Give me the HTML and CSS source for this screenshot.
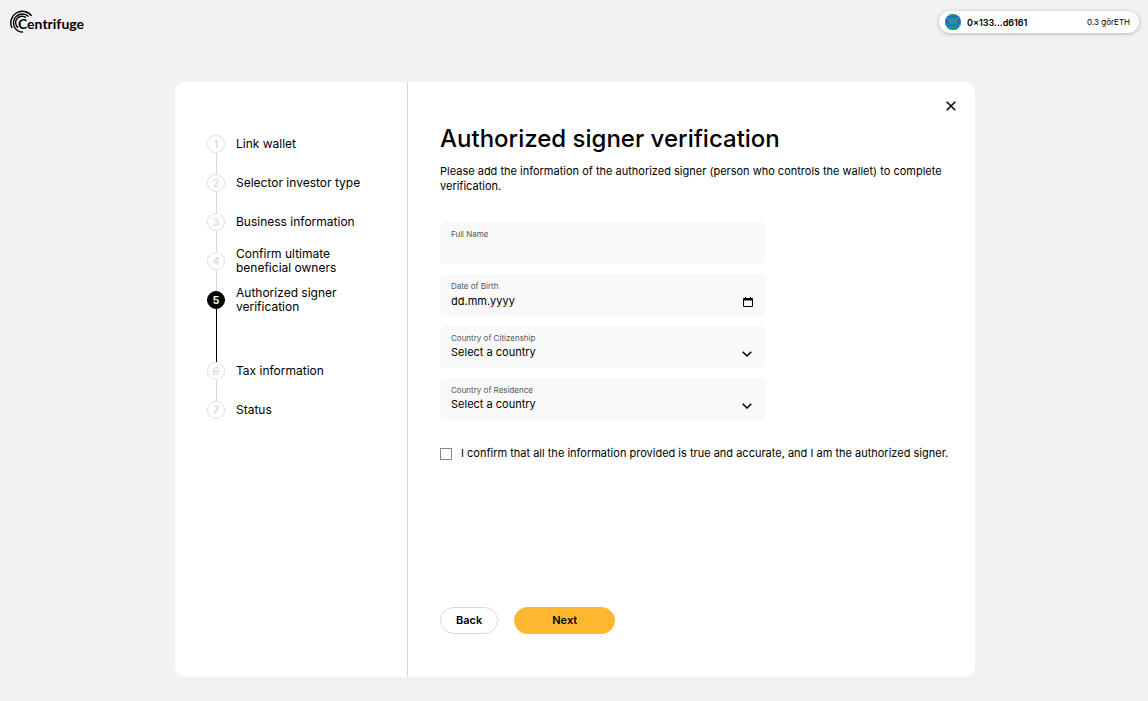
FILE: index.html
```html
<!DOCTYPE html>
<html lang="en">
<head>
<meta charset="utf-8">
<meta name="viewport" content="width=device-width, initial-scale=1">
<title>Centrifuge – Authorized signer verification</title>
<link rel="stylesheet" href="styles.css">
</head>
<body>
<header class="topbar">
  <a class="logo" href="#">
    <svg class="logo-mark" viewBox="0 0 24 24" aria-hidden="true">
      <path d="M22.600 5.800A11.600 11.600 0 0 0 3 18"/>
      <path d="M19.600 6.400A9 9 0 1 0 14 22"/>
      <path d="M17 7.600A6.400 6.400 0 0 0 9 17.600"/>
    </svg>
    <span class="logo-text">Centrifuge</span>
  </a>
  <button class="account" type="button">
    <svg class="avatar" viewBox="0 0 8 8" shape-rendering="crispEdges" aria-hidden="true">
      <path fill="#1a6fd0" d="M0 0h8v8H0z"/>
      <path fill="#1a9a8a" d="M2 0h4v1H2zM1 2h6v1H1zM2 3h4v1H2zM0 5h2v1H0zM6 5h2v1H6zM2 4h4v1H2zM2 6h4v2H2z"/>
      <path fill="#e0592a" d="M2 3h1v1H2zM5 3h1v1H5zM1 7h1v1H1zM6 7h1v1H6z"/>
    </svg>
    <span class="address">0×133...d6161</span>
    <span class="balance">0.3 görETH</span>
  </button>
</header>
<main class="page">
  <div class="card">
    <nav class="sidebar" aria-label="Onboarding steps">
      <ol class="steps">
        <li class="step"><span class="num">1</span><span class="name">Link wallet</span></li>
        <li class="step"><span class="num">2</span><span class="name">Selector investor type</span></li>
        <li class="step"><span class="num">3</span><span class="name">Business information</span></li>
        <li class="step"><span class="num">4</span><span class="name">Confirm ultimate beneficial owners</span></li>
        <li class="step active" aria-current="step"><span class="num">5</span><span class="name">Authorized signer verification</span></li>
        <li class="step"><span class="num">6</span><span class="name">Tax information</span></li>
        <li class="step"><span class="num">7</span><span class="name">Status</span></li>
      </ol>
    </nav>
    <form class="content">
      <button class="close" type="button" aria-label="Close">
        <svg viewBox="0 0 10 10" aria-hidden="true"><path d="M.7.7l8.6 8.6M9.3.7L.7 9.3"/></svg>
      </button>
      <h1 class="title">Authorized signer verification</h1>
      <p class="intro">Please add the information of the authorized signer (person who controls the wallet) to complete verification.</p>
      <div class="fields">
        <div class="field">
          <label for="name">Full Name</label>
          <input id="name" type="text">
        </div>
        <div class="field">
          <label for="birth">Date of Birth</label>
          <div class="control date">
            <input id="birth" type="text" placeholder="dd.mm.yyyy">
            <button class="picker" type="button" aria-label="Choose date">
              <svg class="calendar" viewBox="0 0 10 10" aria-hidden="true"><path fill="#000" d="M1 1h1V0h1v1h4V0h1v1h1a1 1 0 0 1 1 1v7a1 1 0 0 1-1 1H1a1 1 0 0 1-1-1V2a1 1 0 0 1 1-1zm0 2.400V9h8V3.400z"/></svg>
            </button>
          </div>
        </div>
        <div class="field">
          <label for="citizenship">Country of Citizenship</label>
          <div class="control">
            <select id="citizenship"><option>Select a country</option></select>
            <svg class="chevron" viewBox="0 0 10 6" aria-hidden="true"><path d="M.7.7L5 5 9.300.7"/></svg>
          </div>
        </div>
        <div class="field">
          <label for="residence">Country of Residence</label>
          <div class="control">
            <select id="residence"><option>Select a country</option></select>
            <svg class="chevron" viewBox="0 0 10 6" aria-hidden="true"><path d="M.7.7L5 5 9.300.7"/></svg>
          </div>
        </div>
      </div>
      <label class="confirm">
        <input type="checkbox">
        <span>I confirm that all the information provided is true and accurate, and I am the authorized signer.</span>
      </label>
      <div class="actions">
        <button class="btn" type="button">Back</button>
        <button class="btn primary" type="submit">Next</button>
      </div>
    </form>
  </div>
</main>
</body>
</html>
```
FILE: styles.css
```css
* {
  box-sizing: border-box;
}

body {
  margin: 0;
  min-height: 100vh;
  display: flex;
  flex-direction: column;
  background: #f2f2f2;
  color: #000;
  font-family: Inter, "Liberation Sans", sans-serif;
  font-size: 11px;
  line-height: 15px;
}

button,
input,
select {
  font: inherit;
  color: inherit;
  margin: 0;
  padding: 0;
  border: 0;
  background: none;
}

button {
  cursor: pointer;
}

.topbar {
  display: flex;
  align-items: center;
  justify-content: space-between;
  padding: 10px 9px 0;
}

.logo {
  display: flex;
  position: relative;
  align-items: center;
  height: 24px;
  padding: 4px 0 0 9px;
  color: #000;
  text-decoration: none;
}

.logo-mark {
  position: absolute;
  left: 0;
  top: 0;
  width: 24px;
  height: 24px;
  fill: none;
  stroke: #000;
  stroke-width: 1.4;
}

.logo-text {
  font-family: Lato, sans-serif;
  font-size: 14px;
  font-weight: 700;
  line-height: 20px;
}

.account {
  display: flex;
  align-items: center;
  width: 200px;
  height: 22px;
  padding: 0 9px 0 6px;
  border-radius: 11px;
  background: #fff;
  box-shadow: 0 1px 4px rgba(0, 0, 0, 0.25);
}

.avatar {
  width: 16px;
  height: 16px;
  margin-right: 6px;
  border-radius: 50%;
}

.address {
  font-size: 9px;
  font-weight: 600;
}

.balance {
  margin-left: auto;
  font-size: 8px;
}

.page {
  flex: 1;
  display: flex;
  justify-content: center;
  padding: 48px 24px 24px 26px;
}

.card {
  display: flex;
  width: 100%;
  max-width: 800px;
  border-radius: 10px;
  background: #fff;
}

.sidebar {
  flex: 0 0 233px;
  padding: 53px 32px;
  border-right: 1px solid #d9d9d9;
}

.steps {
  margin: 0;
  padding: 0;
  list-style: none;
}

.step {
  position: relative;
  display: flex;
  align-items: flex-start;
  gap: 11px;
  height: 39px;
}

.step:not(:last-child)::after {
  content: "";
  position: absolute;
  left: 9px;
  top: 18px;
  bottom: 0;
  width: 1px;
  background: #d9d9d9;
}

.num {
  flex: none;
  width: 18px;
  height: 18px;
  border: 1px solid #e0e0e0;
  border-radius: 50%;
  color: #d9d9d9;
  font-weight: 500;
  line-height: 16px;
  text-align: center;
}

.name {
  display: flex;
  align-items: center;
  height: 18px;
  max-width: 130px;
  font-size: 12px;
  line-height: 14px;
}

.active {
  height: 71px;
}

.active .num {
  border-color: #000;
  background: #000;
  color: #fff;
  font-weight: 600;
}

.step.active::after {
  background: #000;
}

.content {
  position: relative;
  flex: 1;
  display: flex;
  flex-direction: column;
  min-width: 0;
  padding: 41px 24px 43px 32px;
}

.close {
  position: absolute;
  top: 16px;
  right: 16px;
  width: 16px;
  height: 16px;
  display: grid;
  place-items: center;
}

.close svg {
  width: 10px;
  height: 10px;
  stroke: #000;
  stroke-width: 1.5;
}

.title {
  margin: 0 0 9px;
  font-size: 24px;
  font-weight: 500;
  line-height: 32px;
}

.intro {
  margin: 0 0 28px;
}

.fields {
  display: flex;
  flex-direction: column;
  gap: 10px;
  width: 326px;
  max-width: 100%;
}

.field {
  height: 42px;
  padding: 7px 12px 0 11px;
  border-radius: 6px;
  background: #f9f9f9;
}

.field label {
  display: block;
  color: #555;
  font-size: 8px;
  line-height: 10px;
}

.field input,
.field select {
  display: block;
  width: 100%;
  height: 18px;
  appearance: none;
  outline: none;
}

.field input::placeholder {
  color: #000;
  opacity: 1;
}

.control {
  position: relative;
}

.date {
  padding-top: 1px;
}

.picker {
  position: absolute;
  right: 0;
  top: 5px;
  width: 12px;
  height: 12px;
  display: grid;
  place-items: center;
}

.calendar {
  width: 10px;
  height: 10px;
}

.chevron {
  position: absolute;
  right: 2px;
  top: 8px;
  width: 10px;
  height: 6px;
  fill: none;
  stroke: #000;
  stroke-width: 1.5;
  pointer-events: none;
}

.confirm {
  display: flex;
  align-items: center;
  gap: 9px;
  margin-top: 26px;
}

.confirm input {
  flex: none;
  width: 12px;
  height: 12px;
  appearance: none;
  border: 1px solid #888;
  background: #fff;
}

.confirm input:checked {
  background: #000;
}

.actions {
  display: flex;
  gap: 16px;
  margin-top: auto;
}

.btn {
  height: 27px;
  padding: 0 15px;
  border: 1px solid #d9d9d9;
  border-radius: 14px;
  background: #fff;
  font-weight: 600;
}

.primary {
  width: 101px;
  border-color: #ffb72f;
  background: #ffb72f;
}
```
